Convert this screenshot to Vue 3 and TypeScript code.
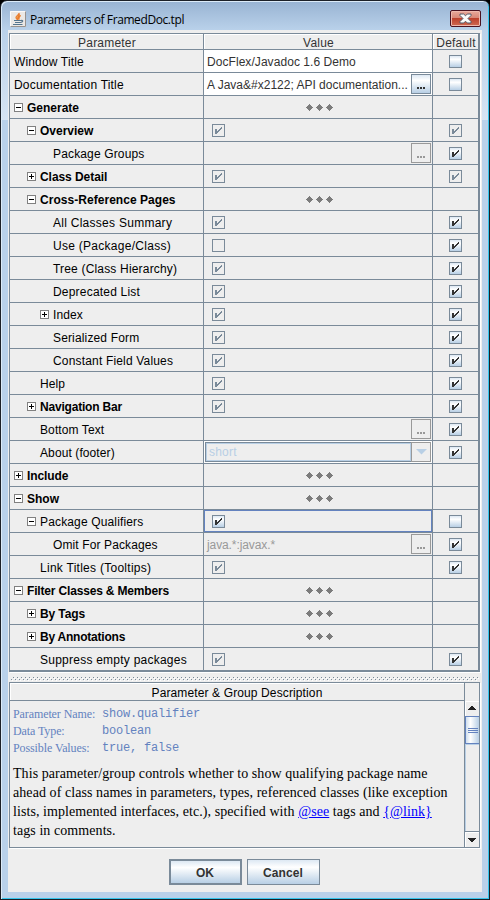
<script setup lang="ts">
type Editor = 'text' | 'dots' | 'check' | 'combo' | 'none'
type Mark = 'on' | 'off' | 'dim' | 'dimOff' | ''

interface Row {
  label: string
  level: number
  node?: '+' | '-'
  bold?: boolean
  editor: Editor
  value?: string
  check?: Mark
  browse?: 'on' | 'off'
  def: Mark
  focus?: boolean
  white?: boolean
  tracking?: number
}

const rows: Row[] = [
  { label: 'Window Title', level: 0, editor: 'text', value: 'DocFlex/Javadoc 1.6 Demo', white: true, def: 'off', tracking: 0.15 },
  { label: 'Documentation Title', level: 0, editor: 'text', value: 'A Java&#x2122; API documentation...', white: true, browse: 'on', def: 'off', tracking: 0.2 },
  { label: 'Generate', level: 0, node: '-', bold: true, editor: 'dots', def: '' },
  { label: 'Overview', level: 1, node: '-', bold: true, editor: 'check', check: 'dim', def: 'dim' },
  { label: 'Package Groups', level: 3, editor: 'text', value: '', browse: 'off', def: 'on', tracking: 0.15 },
  { label: 'Class Detail', level: 1, node: '+', bold: true, editor: 'check', check: 'dim', def: 'dim', tracking: -0.06 },
  { label: 'Cross-Reference Pages', level: 1, node: '-', bold: true, editor: 'dots', def: '', tracking: 0.04 },
  { label: 'All Classes Summary', level: 3, editor: 'check', check: 'dim', def: 'on', tracking: 0.27 },
  { label: 'Use (Package/Class)', level: 3, editor: 'check', check: 'dimOff', def: 'on', tracking: 0.28 },
  { label: 'Tree (Class Hierarchy)', level: 3, editor: 'check', check: 'dim', def: 'on', tracking: 0.18 },
  { label: 'Deprecated List', level: 3, editor: 'check', check: 'dim', def: 'on', tracking: 0.2 },
  { label: 'Index', level: 2, node: '+', editor: 'check', check: 'dim', def: 'on' },
  { label: 'Serialized Form', level: 3, editor: 'check', check: 'dim', def: 'on', tracking: 0.15 },
  { label: 'Constant Field Values', level: 3, editor: 'check', check: 'dim', def: 'on', tracking: 0.17 },
  { label: 'Help', level: 2, editor: 'check', check: 'dim', def: 'on' },
  { label: 'Navigation Bar', level: 1, node: '+', bold: true, editor: 'check', check: 'dim', def: 'on', tracking: -0.2 },
  { label: 'Bottom Text', level: 2, editor: 'text', value: '', browse: 'off', def: 'on' },
  { label: 'About (footer)', level: 2, editor: 'combo', value: 'short', def: 'on' },
  { label: 'Include', level: 0, node: '+', bold: true, editor: 'dots', def: '', tracking: -0.1 },
  { label: 'Show', level: 0, node: '-', bold: true, editor: 'dots', def: '' },
  { label: 'Package Qualifiers', level: 1, node: '-', editor: 'check', check: 'on', focus: true, def: 'off', tracking: 0.15 },
  { label: 'Omit For Packages', level: 3, editor: 'text', value: 'java.*:javax.*', browse: 'off', def: 'on', tracking: 0.12 },
  { label: 'Link Titles (Tooltips)', level: 2, editor: 'check', check: 'dim', def: 'on', tracking: 0.27 },
  { label: 'Filter Classes & Members', level: 0, node: '-', bold: true, editor: 'dots', def: '', tracking: -0.17 },
  { label: 'By Tags', level: 1, node: '+', bold: true, editor: 'dots', def: '', tracking: -0.1 },
  { label: 'By Annotations', level: 1, node: '+', bold: true, editor: 'dots', def: '', tracking: -0.22 },
  { label: 'Suppress empty packages', level: 2, editor: 'check', check: 'dim', def: 'on', tracking: 0.24 },
]

const checkPath = 'M3 5h2v5h-2zM5 7h1v2h-1zM6 6h1v2h-1zM7 5h1v2h-1zM8 4h1v2h-1zM9 3h1v2h-1z'
</script>

<template>
  <div class="window">
    <header class="titlebar">
      <svg class="java" width="16" height="16" viewBox="0 0 16 16">
        <rect width="16" height="16" fill="#ebe8e5" />
        <path d="M.5 15.500V.5H15.500" fill="none" stroke="#fbfaf9" />
        <path d="M15.500 .5V15.500H.5" fill="none" stroke="#98928e" />
        <path d="M9 2C9.500 4.200 5 4.800 6 7L7.500 9C7 6.500 10.500 5 9 2M10.800 4.500C8 5.500 8.500 7 9 8.800" fill="#f0a050" stroke="#e87a2c" stroke-width="1.100" />
        <path d="M4 9.500H11M11 9.500c2.500-.8 2.200 1.800-.6 2M5 11.500h5.500M3 13.500h9.500" fill="none" stroke="#55758e" stroke-width="1.200" />
      </svg>
      <span class="title">Parameters of FramedDoc.tpl</span>
      <button class="close" aria-label="Close">
        <svg width="13" height="11" viewBox="0 0 13 11">
          <path d="M1 1h3.700l1.800 1.800L8.300 1H12v1.500L9 5.500l3 3V10H8.300L6.500 8.200 4.700 10H1V8.500l3-3-3-3z" fill="#fafafa" stroke="#555b68" />
        </svg>
      </button>
    </header>

    <main class="content">
      <section class="grid">
        <div class="row head">
          <div class="cell">Parameter</div>
          <div class="cell">Value</div>
          <div class="cell">Default</div>
        </div>
        <div v-for="row in rows" :key="row.label" class="row">
          <div class="cell name" :class="['level' + row.level, { bold: row.bold }]">
            <svg v-if="row.node" class="node" width="9" height="9" viewBox="0 0 9 9">
              <rect x=".5" y=".5" width="8" height="8" fill="#fff" stroke="#808080" />
              <path :d="row.node === '+' ? 'M2 4.500h5M4.500 2v5' : 'M2 4.500h5'" stroke="#000" />
            </svg>
            <span class="label" :style="{ letterSpacing: (row.tracking ?? (row.bold ? 0 : 0.1)) + 'px' }">{{ row.label }}</span>
          </div>
          <div class="cell value" :class="{ white: row.white, focus: row.focus, combo: row.editor === 'combo' }">
            <svg v-if="row.editor === 'dots'" class="dots" width="27" height="7" viewBox="0 0 27 7">
              <path v-for="x in [0, 10, 20]" :key="x" :transform="`translate(${x} 0)`" d="M3 0h1v1h1v1h1v1h1v1h-1v1h-1v1h-1v1h-1v-1h-1v-1h-1v-1h-1v-1h1v-1h1v-1h1z" fill="#7c7c7c" />
            </svg>
            <span v-else-if="row.editor === 'check'" class="box" :class="row.check">
              <svg v-if="row.check !== 'dimOff'" width="13" height="13" viewBox="0 0 13 13"><path :d="checkPath" shape-rendering="crispEdges" /></svg>
            </span>
            <template v-else-if="row.editor === 'combo'">
              <span class="combo-text">{{ row.value }}</span>
              <span class="combo-arrow"><svg width="11" height="6" viewBox="0 0 11 6"><path d="M0 0h11L5.500 5.500z" fill="#b8cfe5" /></svg></span>
            </template>
            <template v-else>
              <span class="text" :class="{ faded: !row.white, tight: row.browse }">{{ row.value }}</span>
              <span v-if="row.browse" class="browse" :class="row.browse">
                <i></i><i></i><i></i>
              </span>
            </template>
          </div>
          <div class="cell default">
            <span v-if="row.def" class="box" :class="row.def">
              <svg v-if="row.def !== 'off'" width="13" height="13" viewBox="0 0 13 13"><path :d="checkPath" shape-rendering="crispEdges" /></svg>
            </span>
          </div>
        </div>
      </section>

      <svg class="divider" width="472" height="5">
        <defs>
          <pattern id="bumps" width="4" height="4" patternUnits="userSpaceOnUse">
            <path d="M0 0h1v1H0zM2 2h1v1H2z" fill="#7a8a99" />
            <path d="M1 1h1v1H1zM3 3h1v1H3z" fill="#fff" />
          </pattern>
        </defs>
        <rect x="2" width="468" height="4" fill="url(#bumps)" />
      </svg>

      <section class="description">
        <div class="pane">
          <div class="pane-head">Parameter &amp; Group Description</div>
          <div class="pane-body">
            <dl>
              <dt>Parameter Name:</dt><dd>show.qualifier</dd>
              <dt>Data Type:</dt><dd>boolean</dd>
              <dt>Possible Values:</dt><dd>true, false</dd>
            </dl>
            <p>
              <span class="line">This parameter/group controls whether to show qualifying package name</span>
              <span class="line">ahead of class names in parameters, types, referenced classes (like exception</span>
              <span class="line">lists, implemented interfaces, etc.), specified with <a>@see</a> tags and <a>{@link}</a></span>
              <span class="line">tags in comments.</span>
            </p>
          </div>
        </div>
        <div class="scroll">
          <div class="corner"></div>
          <div class="arrow up"><svg width="8" height="4" viewBox="0 0 8 4"><path d="M3 0h2v1h1v1h1v1h1v1H0V3h1V2h1V1h1z" fill="#222" /></svg></div>
          <div class="thumb"><i></i><i></i><i></i></div>
          <div class="track"></div>
          <div class="arrow down"><svg width="8" height="4" viewBox="0 0 8 4"><path d="M0 0h8v1H7v1H6v1H5v1H3V3H2V2H1V1H0z" fill="#222" /></svg></div>
        </div>
      </section>

      <footer class="actions">
        <button class="btn ok">OK</button>
        <button class="btn">Cancel</button>
      </footer>
    </main>
  </div>
</template>

<style>
body { margin: 0; background: #000; }
</style>

<style scoped>
* { box-sizing: border-box; }
.window {
  width: 490px; height: 900px; padding: 0 7px 6px 6px; overflow: hidden;
  border: 1px solid #1c2027; border-radius: 7px 7px 0 0;
  background: linear-gradient(#98b3d2, #b9d1ea 29px, #d6e4f3 119px, #b9d1ea 119px);
  box-shadow: inset 1px 1px #dcebf8, inset -1px -1px #35c5ec;
  font: 12px "Liberation Sans", Arial, sans-serif; color: #333;
}
.titlebar { height: 29px; display: flex; align-items: flex-start; padding: 10px 1px 0 3px; color: #000; }
.java { flex: none; }
.title { font: 12px/17px "Open Sans", "Noto Sans", sans-serif; margin-left: 4px; white-space: nowrap; letter-spacing: -.4px; }
.close {
  margin: -1px 0 0 auto; width: 31px; height: 17px; padding: 0; border: 1px solid #4a1220; border-radius: 2px;
  background: linear-gradient(#e9a99b, #d98878 45%, #bd412d 50%, #cf6a52); box-shadow: inset 0 0 0 1px #eeb8ad;
  display: flex; align-items: center; justify-content: center;
}
.content { margin-left: 1px; width: 474px; height: 862px; padding: 3px 1px 0; background: #eee; display: flex; flex-direction: column; }
.grid { width: 471px; border: solid #7a8a99; border-width: 1px 2px 1px 1px; box-shadow: 1px 1px #fff; }
.row { height: 23px; display: grid; grid-template-columns: 194px 229px 45px; grid-template-rows: 100%; }
.cell { border-bottom: 1px solid #7a8a99; border-right: 1px solid #7a8a99; min-width: 0; display: flex; align-items: center; white-space: nowrap; }
.cell:last-child { border-right: 0; }
.row.head { height: 16px; }
.head .cell { justify-content: center; box-shadow: inset 1px 1px #fff; line-height: 12px; letter-spacing: .2px; padding: 3px 0 0 1px; }
.name { color: #000; }
.label { line-height: 14px; padding-top: 2px; }
.level0 { padding-left: 4px; }
.level1 { padding-left: 17px; }
.level2 { padding-left: 30px; }
.level3 { padding-left: 43px; }
.node { flex: none; margin-right: 4px; }
.bold { font-weight: bold; }
.value { padding-left: 3px; }
.white { background: #fff; }
.focus { box-shadow: inset 0 0 0 1px #6382bf; }
.dots { margin: 0 0 0 99px; }
.box { width: 13px; height: 13px; border: 1px solid #7a8a99; display: block; flex: none; }
.value .box { margin-left: 5px; }
.default .box { margin-left: 16px; }
.box svg { display: block; margin: -1px; fill: #333; }
.on, .off { background: linear-gradient(#dde8f3, #fff 30%, #b8cfe5); }
.dim, .dimOff { background: none; }
.box.dim svg { fill: #7a8a99; }
.text { flex: 1; letter-spacing: .06px; line-height: 14px; padding-top: 2px; }
.tight { letter-spacing: 0; }
.faded { color: #999; letter-spacing: -.1px; }
.browse { width: 20px; height: 20px; margin-right: 1px; border: 1px solid #999; display: flex; align-items: flex-end; justify-content: center; gap: 1px; padding-bottom: 4px; }
.browse i { width: 2px; height: 2px; background: #999; }
.browse.on { border-color: #7a8a99; background: linear-gradient(#dde8f3, #fff 30%, #b8cfe5); }
.browse.on i { background: #333; }
.browse.off { background: none; }
.combo { padding: 0 1px; background: #fff; }
.combo-text { flex: 1; height: 20px; background: #eee; border: 1px solid #7a8a99; box-shadow: inset 0 0 0 1px #b8cfe5; color: #b8cfe5; line-height: 18px; padding-left: 3px; letter-spacing: .2px; }
.combo-arrow { width: 20px; height: 20px; margin-left: -1px; background: #eee; border: 1px solid #999; display: flex; align-items: center; justify-content: center; }
.divider { display: block; flex: none; margin-top: 5px; }
.description { width: 471px; height: 166px; border: 1px solid #7a8a99; box-shadow: 1px 1px #fff; display: flex; }
.pane { width: 455px; border-right: 1px solid #7a8a99; }
.pane-head { height: 18px; border-bottom: 1px solid #7a8a99; box-shadow: inset 1px 1px #fff; text-align: center; line-height: 20px; color: #000; letter-spacing: .12px; }
.pane-body { padding: 5px 0 0 3px; font-family: "Liberation Serif", "Times New Roman", serif; }
dl { margin: 0; display: grid; grid-template-columns: 89px 1fr; grid-auto-rows: 17px; line-height: 17px; color: #6382bf; font-size: 12px; }
dt { letter-spacing: -.1px; }
dd { margin: 0; font-family: "Liberation Mono", "Courier New", monospace; font-size: 12px; letter-spacing: -.2px; }
p { margin: 7px 0 0; font-size: 14px; line-height: 19px; color: #000; letter-spacing: .07px; }
.line { display: block; white-space: nowrap; }
a { color: #00f; text-decoration: underline; }
.scroll { width: 14px; display: flex; flex-direction: column; }
.corner { height: 18px; }
.arrow { height: 15px; display: flex; align-items: center; justify-content: center; box-shadow: inset 1px 1px #fff; }
.up { padding-bottom: 1px; }
.thumb { height: 28px; border: 1px solid #6382bf; border-width: 1px 0 1px 1px; background: linear-gradient(90deg, #cfdeed, #fff 35%, #b8cfe5); display: flex; flex-direction: column; align-items: center; justify-content: center; gap: 1px; }
.thumb i { width: 10px; height: 1px; background: #6382bf; }
.track { flex: 1; border-left: 1px solid #b8cfe5; box-shadow: inset 0 1px #b8cfe5; }
.down { border-top: 1px solid #7a8a99; height: 16px; }
.actions { display: flex; justify-content: center; gap: 5px; padding: 11px 2px 0 0; }
.btn { width: 73px; height: 26px; padding: 1px 0 0; border: 1px solid #7a8a99; background: linear-gradient(#dde8f3, #fff 30%, #b8cfe5); font: bold 12px "Liberation Sans", Arial, sans-serif; color: #333; letter-spacing: .1px; }
.ok { border-width: 2px; }
</style>
